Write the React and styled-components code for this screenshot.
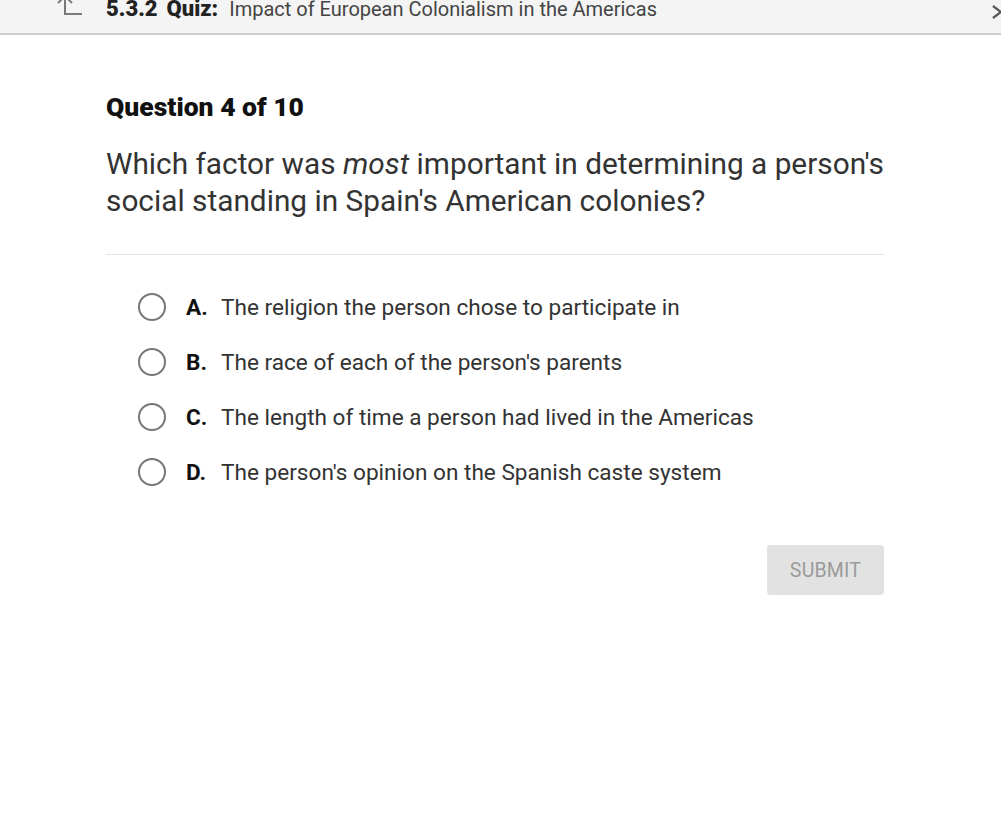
import styled, { createGlobalStyle } from "styled-components";

const Global = createGlobalStyle`
  html, body {
    margin: 0;
    padding: 0;
    background: #ffffff;
    font-family: Roboto, "Noto Sans", Arial, sans-serif;
  }
`;

const Page = styled.div`
  width: 1001px;
  height: 816px;
  overflow: hidden;
  background: #fff;
`;

const TopBar = styled.div`
  height: 45px;
  margin-top: -10px;
  padding-top: 9px;
  box-sizing: border-box;
  background: #f4f4f4;
  border-bottom: 2px solid #cccccc;
  display: flex;
  align-items: flex-start;
  position: relative;
  color: #222;
  font-size: 20px;
  line-height: 20px;
`;

const BackIcon = styled.div`
  width: 106px;
  padding-left: 56px;
  box-sizing: border-box;
  color: #7a7a7a;
  margin-top: -4px;
`;

const Num = styled.span`
  font-weight: 900;
  font-size: 22px;
  margin-right: 9px;
`;

const QuizLabel = styled.span`
  font-weight: 900;
  font-size: 22px;
  margin-right: 11px;
`;

const QuizTitle = styled.span`
  font-weight: 400;
  color: #444;
`;

const NextIcon = styled.div`
  position: absolute;
  right: -5px;
  top: 13px;
  color: #555;
`;

const Main = styled.div`
  padding: 58px 117px 0 106px;
`;

const Counter = styled.h2`
  margin: 0;
  font-size: 26.5px;
  font-weight: 900;
  color: #111;
  line-height: 28px;
`;

const Prompt = styled.p`
  margin: 24px 0 0;
  font-size: 29.8px;
  line-height: 37px;
  color: #333;
  font-weight: 400;
  white-space: nowrap;
  em {
    font-style: italic;
  }
`;

const Divider = styled.hr`
  margin: 35px 0 0;
  border: none;
  border-top: 1px solid #e2e2e2;
`;

const Options = styled.div`
  margin-top: 38px;
  padding-left: 32px;
  display: flex;
  flex-direction: column;
  gap: 27px;
`;

const Option = styled.label`
  display: flex;
  align-items: center;
  height: 28px;
  font-size: 22.6px;
  color: #333;
  cursor: pointer;
`;

const Radio = styled.span`
  width: 24px;
  height: 24px;
  border: 2px solid #777;
  border-radius: 50%;
  margin-right: 20px;
  flex-shrink: 0;
`;

const Letter = styled.span`
  font-weight: 700;
  color: #111;
  width: 35px;
`;

const Footer = styled.div`
  display: flex;
  justify-content: flex-end;
  margin-top: 59px;
`;

const SubmitButton = styled.button`
  width: 117px;
  height: 50px;
  border: none;
  border-radius: 4px;
  background: #e2e2e2;
  color: #9a9a9a;
  font-family: Roboto, Arial, sans-serif;
  font-size: 19.5px;
  font-weight: 400;
  letter-spacing: 0.2px;
`;

const choices = [
  { id: "A", text: "The religion the person chose to participate in" },
  { id: "B", text: "The race of each of the person's parents" },
  { id: "C", text: "The length of time a person had lived in the Americas" },
  { id: "D", text: "The person's opinion on the Spanish caste system" },
];

const App = () => {
  return (
    <Page>
      <Global />
      <TopBar>
        <BackIcon>
          <svg width="28" height="22" viewBox="0 0 28 22" fill="none" stroke="currentColor" strokeWidth="2">
            <path d="M2 8 L9 1 L16 8" />
            <path d="M9 1 V19 H26" />
          </svg>
        </BackIcon>
        <Num>5.3.2</Num>
        <QuizLabel>Quiz:</QuizLabel>
        <QuizTitle>Impact of European Colonialism in the Americas</QuizTitle>
        <NextIcon>
          <svg width="16" height="16" viewBox="0 0 16 16" fill="none" stroke="currentColor" strokeWidth="2.2">
            <path d="M3 2 L11 8 L3 14" />
          </svg>
        </NextIcon>
      </TopBar>
      <Main>
        <Counter>Question 4 of 10</Counter>
        <Prompt>
          Which factor was <em>most</em> important in determining a person's
          <br />
          social standing in Spain's American colonies?
        </Prompt>
        <Divider />
        <Options>
          {choices.map(({ id, text }) => (
            <Option key={id}>
              <Radio />
              <Letter>{id}.</Letter>
              {text}
            </Option>
          ))}
        </Options>
        <Footer>
          <SubmitButton>SUBMIT</SubmitButton>
        </Footer>
      </Main>
    </Page>
  );
};

export default App;
